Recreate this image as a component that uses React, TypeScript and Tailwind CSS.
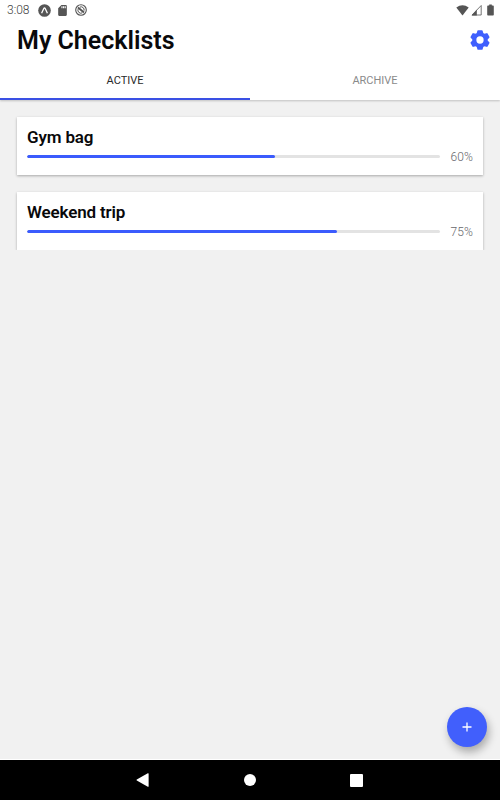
import { MdSdCard } from "react-icons/md";

type Checklist = {
  title: string;
  percent: number;
  label: string;
};

const checklists: Checklist[] = [
  { title: "Gym bag", percent: 60, label: "60%" },
  { title: "Weekend trip", percent: 75, label: "75%" },
];

function StatusBar() {
  return (
    <div className="flex h-5 items-center justify-between pl-[7px] pr-1 text-[#555]">
      <div className="flex items-center">
        <span className="w-[31px] text-[12px] font-light leading-[21px] text-[#444]">3:08</span>
        <svg viewBox="0 0 13 13" className="h-[13px] w-[13px]">
          <circle cx="6.5" cy="6.5" r="6.3" fill="#555" />
          <path d="M3.6 9.2 5.8 4.5Q6.5 3.2 7.2 4.5L9.4 9.2" fill="none" stroke="#fff" strokeWidth="1.3" />
        </svg>
        <MdSdCard className="ml-[5px] h-[13px] w-[13px]" />
        <svg viewBox="0 0 12 12" className="ml-1.5 h-3 w-3" fill="none" stroke="#555">
          <circle cx="6" cy="6" r="5.3" strokeWidth="1.1" />
          <path d="M3.1 5.1A3 3 0 0 0 7.2 8.9M4.9 3.1A3 3 0 0 1 9 6.7" strokeWidth="1" />
          <path d="M3 3.4 9 8.4" strokeWidth="1.9" />
        </svg>
      </div>
      <div className="flex h-3 items-center">
        <svg viewBox="0 0 13 12" className="h-3 w-[13px]">
          <path d="M.3 3.4Q6.5-1 12.7 3.4L6.5 11.4z" fill="#555" />
        </svg>
        <svg viewBox="0 0 11 12" className="ml-0.5 h-3 w-[11px]">
          <path d="M1 11 10.2 1.5V11z" fill="none" stroke="#666" strokeWidth="0.9" />
          <path d="M.5 11.4 5.8 5.8v5.6z" fill="#555" />
        </svg>
        <svg viewBox="0 0 7 12" className="ml-[5px] mr-0.5 h-3 w-[7px]">
          <path d="M2.2.5h2.6v1H6q.8 0 .8.7v8.6q0 .7-.8.7H1q-.8 0-.8-.7V2.2q0-.7.8-.7h1.2z" fill="#555" />
        </svg>
      </div>
    </div>
  );
}

function GearIcon() {
  return (
    <svg viewBox="0 0 20 20" className="h-5 w-5" fill="#3f5ffd">
      <circle cx="10" cy="10" r="5.6" fill="none" stroke="#3f5ffd" strokeWidth="3.9" />
      {[0, 60, 120, 180, 240, 300].map((angle) => (
        <path key={angle} d="M6.2 4.8 7.4.8Q7.6.2 8.2.2h3.6q.6 0 .8.6l1.2 4z" transform={`rotate(${angle} 10 10)`} />
      ))}
    </svg>
  );
}

function ChecklistCard({ item }: { item: Checklist }) {
  return (
    <div className="h-[58px] bg-white px-2.5 pt-2.5 shadow-[0_0.5px_2.5px_rgba(0,0,0,0.3)]">
      <h2 className="text-[17px] font-semibold leading-5 tracking-[-0.15px] text-[#09090b]">{item.title}</h2>
      <div className="flex h-[19px] items-center">
        <div className="h-[3px] flex-1 overflow-hidden rounded-full bg-[#e3e3e3]">
          <div className="h-full rounded-full bg-[#3b5bfd]" style={{ width: `${item.percent}%` }} />
        </div>
        <span className="w-[33px] text-right text-[12px] font-light leading-4 tracking-[0.1px] text-[#66666b]">{item.label}</span>
      </div>
    </div>
  );
}

export default function App() {
  return (
    <div className="flex h-[800px] w-[500px] flex-col overflow-hidden bg-[#f1f1f1] font-['Roboto',sans-serif]">
      <header className="z-10 h-[100px] shrink-0 bg-white shadow-[0_1px_2px_rgba(0,0,0,0.2)]">
        <StatusBar />
        <div className="flex h-10 items-center justify-between pl-[17px] pr-2.5">
          <h1 className="pt-0.5 text-[25px] font-semibold leading-10 text-[#09090b]">My Checklists</h1>
          <GearIcon />
        </div>
        <div className="flex h-10 text-[11px] leading-[42px]">
          <button className="flex-1 border-b-2 border-[#3a50e4] text-[#2a2a2a]">ACTIVE</button>
          <button className="flex-1 border-b-2 border-transparent text-[#8a8a8a]">ARCHIVE</button>
        </div>
      </header>

      {/* Checklists */}
      <main className="h-[150px] shrink-0 space-y-[17px] overflow-hidden px-[17px] pt-[17px]">
        {checklists.map((item) => (
          <ChecklistCard key={item.title} item={item} />
        ))}
      </main>

      <div className="flex flex-1 items-end justify-end border-b border-white pb-3 pr-[13.5px]">
        <button className="flex h-10 w-10 items-center justify-center rounded-full bg-[#415ffc] shadow-[2px_5px_9px_rgba(0,0,0,0.3)]">
          <svg viewBox="0 0 10 10" className="h-2.5 w-2.5">
            <path d="M5 .5v9M.5 5h9" stroke="#fff" strokeWidth="1.3" />
          </svg>
        </button>
      </div>

      {/* System navigation */}
      <nav className="flex h-10 shrink-0 items-center justify-center bg-black pr-0.5">
        <svg viewBox="0 0 14 14" className="h-3.5 w-3.5" fill="#fff">
          <path d="M.8 6.5 11.8.3Q12.6 0 12.6.8v12.4q0 .8-.8.5L.8 7.5Q.1 7 .8 6.5z" />
        </svg>
        <div className="ml-[94px] h-3 w-3 rounded-full bg-white" />
        <div className="ml-[94px] h-[13px] w-[13px] rounded-[1px] bg-white" />
      </nav>
    </div>
  );
}
